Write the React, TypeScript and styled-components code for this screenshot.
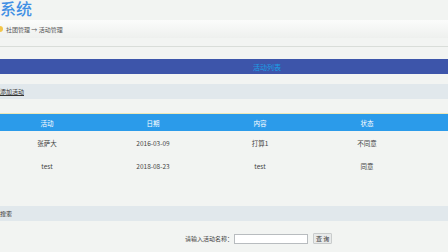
import styled, { createGlobalStyle } from 'styled-components';

const GlobalStyle = createGlobalStyle`
  body {
    margin: 0;
    background: #f2f4f2;
    font-family: "Noto Sans CJK SC", "Noto Sans", sans-serif;
    color: #333;
  }
`;

const Page = styled.div`
  width: 448px;
  height: 252px;
  overflow: hidden;
`;

const Title = styled.h1`
  margin: 0;
  height: 20px;
  font-size: 16px;
  line-height: 16px;
  font-weight: 500;
  color: #3f8fe4;
`;

const Crumbs = styled.div`
  height: 18px;
  display: flex;
  align-items: center;
  gap: 3px;
  font-size: 6px;
  color: #555;
  background: linear-gradient(#fbfcfb, #eef0ee);
`;

const Dot = styled.span`
  width: 6px;
  height: 6px;
  margin-left: -3px;
  border-radius: 50%;
  background: #f3c64a;
`;

const Rule = styled.div`
  margin-top: 8px;
  height: 1px;
  background: #d9ddd9;
`;

const ListBar = styled.div`
  margin-top: 12px;
  height: 15px;
  background: #3d55aa;
  display: flex;
  align-items: center;
  padding-left: 253px;
  font-size: 7px;
  color: #1aa0e6;
`;

const Band = styled.div<{ $top: number }>`
  margin-top: ${({ $top }) => $top}px;
  height: 15px;
  background: #e1e8ec;
  display: flex;
  align-items: center;
  font-size: 6px;
  color: #333;
`;

const AddLink = styled.span`
  text-decoration: underline;
`;

const Table = styled.div`
  margin-top: 14px;
  border-top: 1px solid #ece7b8;
`;

const Row = styled.div<{ $head?: boolean }>`
  display: grid;
  grid-template-columns: 94px 118px 96px 118px 22px;
  height: ${({ $head }) => ($head ? 17 : 23)}px;
  align-items: center;
  font-size: 6.5px;
  background: ${({ $head }) => ($head ? '#2b9bea' : 'transparent')};
  color: ${({ $head }) => ($head ? '#fff' : '#444')};
`;

const Cell = styled.span`
  text-align: center;
`;

const SearchRow = styled.div`
  margin-top: 12px;
  display: flex;
  align-items: center;
  padding-left: 185px;
  font-size: 6px;
  color: #444;
`;

const Input = styled.input`
  box-sizing: border-box;
  width: 74px;
  height: 10px;
  margin: 0 5px 0 1px;
  padding: 0;
  border: 1px solid #b8bcbf;
  background: #fff;
`;

const Button = styled.button`
  height: 11px;
  padding: 0 2px;
  font-family: inherit;
  font-size: 6px;
  line-height: 9px;
  color: #333;
  background: #e8eaea;
  border: 1px solid #c9cccc;
  border-radius: 1px;
`;

const rows = [
  ['张萨大', '2016-03-09', '打算1', '不同意'],
  ['test', '2018-08-23', 'test', '同意'],
];

export default function App() {
  return (
    <Page>
      <GlobalStyle />
      <Title>系统</Title>
      <Crumbs>
        <Dot />
        <span>社团管理 → 活动管理</span>
      </Crumbs>
      <Rule />
      <ListBar>活动列表</ListBar>
      <Band $top={10}>
        <AddLink>添加活动</AddLink>
      </Band>
      <Table>
        <Row $head>
          <Cell>活动</Cell>
          <Cell>日期</Cell>
          <Cell>内容</Cell>
          <Cell>状态</Cell>
        </Row>
        {rows.map((r, i) => (
          <Row key={i}>
            {r.map((c, j) => (
              <Cell key={j}>{c}</Cell>
            ))}
          </Row>
        ))}
      </Table>
      <Band $top={29}>搜索</Band>
      <SearchRow>
        请输入活动名称：
        <Input />
        <Button>查 询</Button>
      </SearchRow>
    </Page>
  );
}
